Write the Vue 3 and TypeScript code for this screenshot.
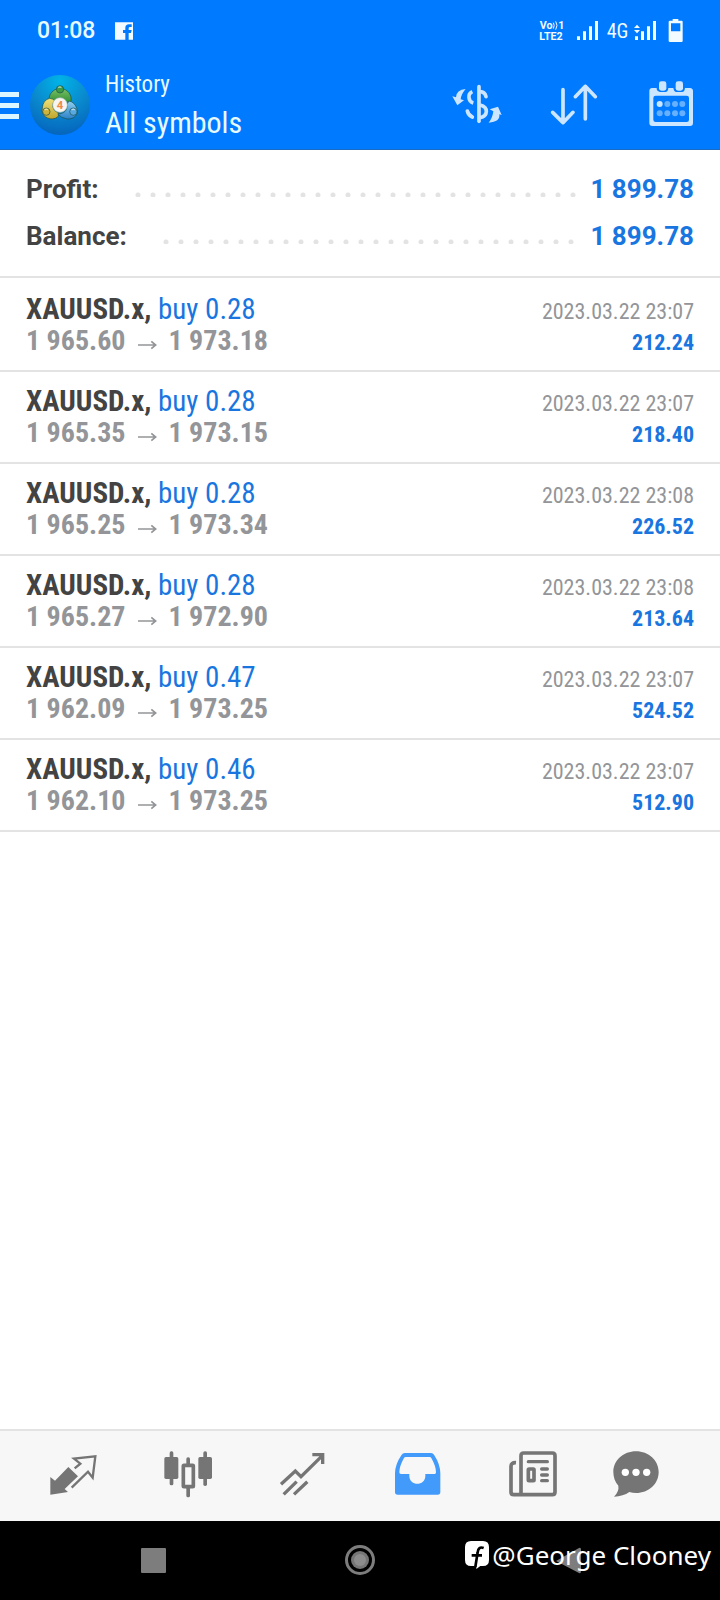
<script setup lang="ts">
interface Total {
  label: string
  value: string
}

interface Deal {
  symbol: string
  side: string
  open: string
  close: string
  time: string
  profit: string
}

const totals: Total[] = [
  { label: 'Profit:', value: '1 899.78' },
  { label: 'Balance:', value: '1 899.78' },
]

const deals: Deal[] = [
  { symbol: 'XAUUSD.x,', side: 'buy 0.28', open: '1 965.60', close: '1 973.18', time: '2023.03.22 23:07', profit: '212.24' },
  { symbol: 'XAUUSD.x,', side: 'buy 0.28', open: '1 965.35', close: '1 973.15', time: '2023.03.22 23:07', profit: '218.40' },
  { symbol: 'XAUUSD.x,', side: 'buy 0.28', open: '1 965.25', close: '1 973.34', time: '2023.03.22 23:08', profit: '226.52' },
  { symbol: 'XAUUSD.x,', side: 'buy 0.28', open: '1 965.27', close: '1 972.90', time: '2023.03.22 23:08', profit: '213.64' },
  { symbol: 'XAUUSD.x,', side: 'buy 0.47', open: '1 962.09', close: '1 973.25', time: '2023.03.22 23:07', profit: '524.52' },
  { symbol: 'XAUUSD.x,', side: 'buy 0.46', open: '1 962.10', close: '1 973.25', time: '2023.03.22 23:07', profit: '512.90' },
]
</script>

<template>
  <div class="screen">
    <header class="top">
      <div class="status">
        <span class="clock">01:08</span>
        <svg class="fb" viewBox="0 0 54 52" aria-hidden="true">
          <path fill="#f2fbff" fill-rule="evenodd" d="M0 0H54V52H41V32H48L50 23H41V18Q41 14 45 14H50V6H42Q31 6 31 17V23H24V32H31V52H0Z" />
        </svg>
        <svg class="indicators" viewBox="354 48 444 84" aria-hidden="true">
          <g fill="#f2fbff">
            <text x="359" y="85" class="volte">Vo</text>
            <text x="415" y="83" class="volte">1</text>
            <text x="358" y="117" class="volte">LTE2</text>
            <path d="M471 106h9v11h-9zM489 91h9v26h-9zM507 76h9v41h-9zM525 60h9v57h-9z" />
            <text x="560" y="110" class="net">4G</text>
            <path d="M645 106h9v11h-9zM663 91h9v26h-9zM681 76h9v41h-9zM699 60h9v57h-9z" />
            <path d="M651 71l9 10h-18zM651 97l9-10h-18z" />
            <path fill-rule="evenodd" d="M758 54h17v5h10q3 0 3 3v58q0 3-3 3h-35q-4 0-4-3V62q0-3 4-3h8zM753 67v24h28V67z" />
          </g>
          <path d="M400 65q5 8 0 18M407 61q8 12 0 25" fill="none" stroke="#f2fbff" stroke-width="3" />
        </svg>
      </div>

      <div class="bar">
        <button class="menu" type="button" aria-label="Menu">
          <svg viewBox="0 0 19 28" aria-hidden="true">
            <path fill="#dcf6ff" d="M0 1h19v5H0zM0 12h19v5H0zM0 23h19v5H0z" />
          </svg>
        </button>
        <svg class="logo" viewBox="90 225 180 180" aria-hidden="true">
          <defs>
            <radialGradient id="disc" cx="0.5" cy="0.1" r="0.9">
              <stop offset="0" stop-color="#00b4e8" />
              <stop offset="0.5" stop-color="#0a8ccf" />
              <stop offset="1" stop-color="#0565bd" />
            </radialGradient>
            <linearGradient id="green" x1="0" y1="0" x2="0" y2="1">
              <stop offset="0" stop-color="#7cc064" />
              <stop offset="1" stop-color="#2f8f35" />
            </linearGradient>
            <linearGradient id="yellow" x1="0" y1="0" x2="0" y2="1">
              <stop offset="0" stop-color="#efe27a" />
              <stop offset="1" stop-color="#c0a52c" />
            </linearGradient>
            <linearGradient id="blue" x1="0" y1="0" x2="0" y2="1">
              <stop offset="0" stop-color="#8fd0f0" />
              <stop offset="1" stop-color="#2b80c8" />
            </linearGradient>
          </defs>
          <circle cx="180" cy="315" r="90" fill="url(#disc)" />
          <g stroke="#17504f" stroke-width="2">
            <path fill="url(#green)" d="M149 306C143 290 154 272 170 267Q180 263 191 267C207 272 218 290 212 309L198 305Q180 285 163 302Z" />
            <path fill="url(#yellow)" d="M149 295Q159 296 164 302C152 316 160 334 176 338Q178 350 166 355C146 362 122 348 127 324Q129 300 149 295Z" />
            <path fill="url(#blue)" d="M207 303Q223 306 230 324C239 342 222 359 201 357Q183 354 173 342C192 342 204 330 201 312Z" />
            <circle cx="180" cy="268" r="11" fill="#3f9b42" />
            <circle cx="139" cy="335" r="11" fill="#cdb33a" />
            <circle cx="220" cy="335" r="11" fill="#58a9e2" />
          </g>
          <path d="M175 263q5-5 9 0M134 330q5-5 9 0M215 330q5-5 9 0" fill="none" stroke="#fff" stroke-opacity="0.6" stroke-width="4" />
          <circle cx="180" cy="315" r="22" fill="#f8f4f0" stroke="#9fb9b4" stroke-width="2" />
          <text x="180" y="328" text-anchor="middle" class="four">4</text>
        </svg>
        <div class="titles">
          <p class="sub">History</p>
          <h1 class="main">All symbols</h1>
        </div>
        <div class="actions">
          <button type="button" aria-label="Symbols">
            <svg viewBox="96 240 150 150" aria-hidden="true">
              <g fill="none" stroke="#cce6ff" stroke-width="11">
                <path d="M177 260V364" stroke-linecap="round" />
                <path d="M157 275Q145 281 147 293Q148 306 160 309" />
                <path d="M180 275Q195 276 198 290" stroke-linecap="round" />
                <path d="M142 333Q145 346 157 351" stroke-linecap="round" />
                <path d="M180 315Q200 320 199 335Q198 350 180 353" />
              </g>
              <path fill="#cce6ff" d="M137 267Q109 269 108 292L97 289L112 316L132 301L122 298Q124 281 137 267ZM206 368Q241 366 238 343L245 345L234 320L209 328L220 334Q218 354 206 368Z" />
            </svg>
          </button>
          <button type="button" aria-label="Sort">
            <svg viewBox="387 240 150 150" aria-hidden="true">
              <path d="M429 269V367M398 337L429 368L459 337M496 357V259M466 290L496 259L526 290" fill="none" stroke="#cce6ff" stroke-width="11" stroke-linecap="round" stroke-linejoin="round" />
            </svg>
          </button>
          <button type="button" aria-label="Period">
            <svg viewBox="678 240 150 150" aria-hidden="true">
              <path fill="#cce6ff" fill-rule="evenodd" d="M696 264H710V268Q712 276 720 276H736Q744 276 745 264H760Q762 276 769 276H786Q794 276 795 264H810Q819 265 819 273V369Q819 378 810 378H697Q688 378 688 369V273Q688 265 696 264ZM707 287Q700 287 700 294V359Q700 366 707 366H800Q807 366 807 359V294Q807 287 800 287Z" />
              <rect x="717" y="244" width="22" height="28" rx="7" fill="#cce6ff" />
              <rect x="767" y="244" width="22" height="28" rx="7" fill="#cce6ff" />
              <circle cx="719" cy="312" r="9" fill="#cce6ff" />
              <g fill="#66b0ff">
                <circle cx="742" cy="312" r="9" /><circle cx="765" cy="312" r="9" /><circle cx="787" cy="312" r="9" />
                <circle cx="719" cy="340" r="9" /><circle cx="742" cy="340" r="9" /><circle cx="765" cy="340" r="9" /><circle cx="787" cy="340" r="9" />
              </g>
            </svg>
          </button>
        </div>
      </div>
    </header>

    <main class="content">
      <dl class="totals">
        <div v-for="total in totals" :key="total.label" class="total">
          <dt>{{ total.label }}</dt>
          <dd>{{ total.value }}</dd>
        </div>
      </dl>

      <ul class="deals">
        <li v-for="(deal, index) in deals" :key="index" class="deal">
          <div class="line">
            <p class="name"><b>{{ deal.symbol }}</b> <span>{{ deal.side }}</span></p>
            <time class="time">{{ deal.time }}</time>
          </div>
          <div class="line">
            <p class="prices">
              <span>{{ deal.open }}</span>
              <svg class="arrow" viewBox="0 0 57 30" role="img" aria-label="to">
                <path d="M0 15H52M40 4L53 15L40 26" fill="none" stroke="#939598" stroke-width="5" />
              </svg>
              <span>{{ deal.close }}</span>
            </p>
            <p class="profit">{{ deal.profit }}</p>
          </div>
        </li>
      </ul>
    </main>

    <nav class="tabs" aria-label="Sections">
      <button type="button" aria-label="Quotes">
        <svg viewBox="142 93 150 150" aria-hidden="true">
          <path fill="#757575" d="M149 171L163 182L203 141L232 169L192 207L202 216L149 224Z" />
          <path d="M222 145L239 131L220 116L284 109L276 173L262 155L213 203" fill="none" stroke="#757575" stroke-width="7" />
        </svg>
      </button>
      <button type="button" aria-label="Charts">
        <svg viewBox="487 93 150 150" aria-hidden="true">
          <g fill="#757575">
            <rect x="507" y="94" width="11" height="102" rx="5" />
            <rect x="491" y="111" width="42" height="66" rx="5" />
            <rect x="608" y="94" width="11" height="104" rx="5" />
            <rect x="593" y="111" width="41" height="66" rx="5" />
            <rect x="557" y="112" width="11" height="26" rx="5" />
            <rect x="557" y="200" width="11" height="32" rx="5" />
          </g>
          <rect x="548" y="136" width="30" height="64" rx="2" fill="none" stroke="#757575" stroke-width="11" />
        </svg>
      </button>
      <button type="button" aria-label="Trade">
        <svg viewBox="834 93 150 150" aria-hidden="true">
          <g fill="none" stroke="#757575" stroke-width="10">
            <path d="M843 193L886 153L903 170L964 110M937 104H968V132M851 223L890 185M882 223L922 185" />
          </g>
        </svg>
      </button>
      <button type="button" aria-label="History" aria-current="page">
        <svg viewBox="99 93 150 150" aria-hidden="true">
          <path fill="#429bfb" fill-rule="evenodd" d="M134 99H213Q219 99 222 104Q241 133 241 160V216Q241 224 233 224H113Q105 224 105 216V160Q105 133 125 104Q128 99 134 99ZM137 111Q134 111 132 114Q118 139 118 157Q118 162 123 162H148V167C148 199 196 199 196 167V162H224Q228 162 228 157Q228 139 214 114Q212 111 209 111Z" />
        </svg>
      </button>
      <button type="button" aria-label="News">
        <svg viewBox="444 93 150 150" aria-hidden="true">
          <g fill="none" stroke="#757575" stroke-width="11">
            <path d="M483 224V107Q483 99 491 99H577Q585 99 585 107V216Q585 224 577 224H461Q453 224 453 216V139Q453 127 468 128" />
            <path d="M505 125H562M545 147H562M545 165H562M545 182H562" stroke-width="10" stroke-linecap="round" />
            <rect x="505" y="147" width="17" height="35" rx="2" />
          </g>
        </svg>
      </button>
      <button type="button" aria-label="Messages">
        <svg viewBox="753 93 150 150" aria-hidden="true">
          <path fill="#757575" d="M828 94C866 94 896 121 896 156C896 192 866 219 828 219Q818 219 808 216Q790 229 762 230Q778 214 775 197C765 186 760 172 760 156C760 121 790 94 828 94Z" />
          <g fill="#fff"><circle cx="796" cy="157" r="11" /><circle cx="828" cy="157" r="11" /><circle cx="860" cy="157" r="11" /></g>
        </svg>
      </button>
    </nav>

    <div class="system">
      <button type="button" aria-label="Recent apps">
        <svg viewBox="0 0 32 32" aria-hidden="true"><rect x="4" y="3" width="25" height="25" rx="1" fill="#7d7d7d" /></svg>
      </button>
      <button type="button" aria-label="Home">
        <svg viewBox="0 0 32 32" aria-hidden="true">
          <circle cx="16" cy="15" r="13.5" fill="none" stroke="#7d7d7d" stroke-width="3" />
          <circle cx="16" cy="15" r="9" fill="#757575" />
          <circle cx="16" cy="15" r="6" fill="#8c8c8c" />
        </svg>
      </button>
      <button type="button" aria-label="Back">
        <svg viewBox="0 0 32 32" aria-hidden="true"><path d="M5 16L28 3Q30 2 30 5V26Q30 29 28 28Z" fill="#7d7d7d" /></svg>
      </button>
      <div class="credit">
        <svg viewBox="0 0 72 84" aria-hidden="true">
          <path fill="#fff" d="M18 0H54Q72 0 72 18V57Q72 75 54 75H46L34 84V75H18Q0 75 0 57V18Q0 0 18 0Z" />
          <path d="M56 21Q40 15 38 34L31 78M20 43H51" fill="none" stroke="#000" stroke-width="8" />
        </svg>
        <span>@George Clooney</span>
      </div>
    </div>
  </div>
</template>

<style>
body {
  margin: 0;
}
</style>

<style scoped>
.screen {
  display: flex;
  flex-direction: column;
  min-height: 100vh;
  background: #fff;
  color: #434343;
  font-family: "Roboto Condensed", "Liberation Sans Narrow", Roboto, sans-serif;
}

p,
h1,
dl,
dd,
ul {
  margin: 0;
  padding: 0;
}

button {
  display: flex;
  align-items: center;
  justify-content: center;
  padding: 0;
  border: 0;
  background: none;
  cursor: pointer;
}

svg {
  display: block;
  flex: none;
}

.top {
  background: #007aff;
  border-bottom: 1px solid #1a6bc4;
  color: #e6faff;
}

.status {
  display: flex;
  align-items: center;
  height: 61px;
  padding: 0 34px 0 37px;
}

.clock {
  font: 500 23px/28px Roboto, sans-serif;
}

.fb {
  width: 18px;
  height: 18px;
  margin-left: 20px;
}

.indicators {
  width: 148px;
  height: 28px;
  margin-left: auto;
}

.volte {
  font: 700 32px Roboto, sans-serif;
}

.net {
  font: 400 60px "Roboto Condensed", "Liberation Sans Narrow", Roboto, sans-serif;
}

.bar {
  display: flex;
  align-items: center;
  height: 88px;
  padding-right: 24px;
}

.menu svg {
  width: 19px;
  height: 28px;
}

.logo {
  width: 60px;
  height: 60px;
  margin: 0 15px 0 11px;
}

.four {
  font: 700 34px Roboto, sans-serif;
  fill: #ee8a45;
}

.sub {
  font-size: 23px;
  line-height: 36px;
}

.main {
  font-size: 30px;
  font-weight: 400;
  line-height: 40px;
}

.actions {
  display: flex;
  gap: 47px;
  margin-left: auto;
}

.actions svg,
.tabs svg {
  width: 50px;
  height: 50px;
}

.content {
  flex: 1;
}

.totals {
  padding: 16px 26px;
  border-bottom: 2px solid #e3e3e3;
  font: 700 26px/47px Roboto, sans-serif;
}

.total {
  display: flex;
  align-items: center;
}

.total::before {
  content: "";
  order: 1;
  flex: 1;
  height: 5px;
  margin: 9px 14px 0 36px;
  background: radial-gradient(circle at 3px 3px, #e3e3e3 2px, transparent 3px) 0 0 / 15px 5px repeat-x;
}

.total dd {
  order: 2;
  color: #1976e0;
}

.deals {
  padding-top: 2px;
  list-style: none;
}

.deal {
  padding: 13px 26px;
  border-bottom: 2px solid #e3e3e3;
}

.line {
  display: flex;
  align-items: baseline;
  justify-content: space-between;
  height: 32px;
  line-height: 32px;
}

.name {
  font-size: 29px;
}

.name span {
  color: #1976e0;
}

.prices {
  display: flex;
  gap: 12px;
  color: #939598;
  font-size: 28px;
  font-weight: 700;
}

.arrow {
  width: 19px;
  height: 10px;
  margin-top: 15px;
}

.time {
  color: #939598;
  font-size: 22px;
}

.profit {
  color: #1976e0;
  font-size: 22px;
  font-weight: 700;
}

.tabs {
  display: flex;
  height: 90px;
  padding: 0 38px 0 15px;
  border-top: 2px solid #e3e3e3;
  background: #f7f7f7;
}

.tabs button {
  flex: 5;
}

.tabs button:last-child {
  flex: 4;
}

.system {
  position: relative;
  display: grid;
  grid-template-columns: repeat(3, 1fr);
  height: 79px;
  padding: 0 50px;
  background: #000;
}

.system button svg {
  width: 32px;
  height: 32px;
}

.credit {
  position: absolute;
  top: 18px;
  right: 9px;
  display: flex;
  align-items: center;
  gap: 3px;
  color: #fff;
  font: 400 26px/32px "Noto Sans", sans-serif;
}

.credit svg {
  width: 24px;
  height: 28px;
}
</style>
